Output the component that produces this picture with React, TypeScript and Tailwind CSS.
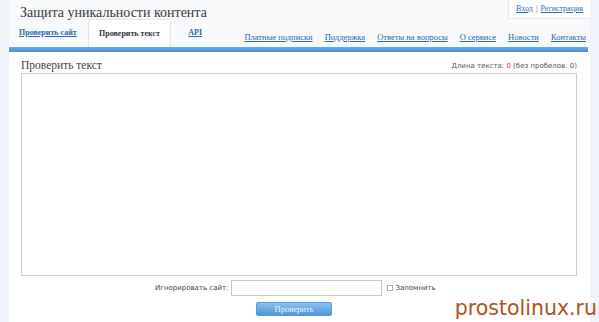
import React from "react";

const serif = { fontFamily: '"Liberation Serif", "DejaVu Serif", serif' };
const sans = { fontFamily: '"DejaVu Sans", Verdana, sans-serif' };

export default function App() {
  const links = [
    "Платные подписки",
    "Поддержка",
    "Ответы на вопросы",
    "О сервисе",
    "Новости",
    "Контакты",
  ];
  return (
    <div className="relative w-[599px] h-[322px] overflow-hidden bg-[#eef4fa] flex justify-center">
      <div className="w-[581px] h-full bg-white flex flex-col">
        {/* header */}
        <div className="relative h-[47px] bg-[#f7f9fb]">
          <div
            className="absolute left-[11px] top-[4px] text-[14px] leading-[18px] text-[#3a3a3a]"
            style={serif}
          >
            Защита уникальности контента
          </div>
          <div
            className="absolute right-0 top-0 h-[19px] w-[82px] bg-white border-l border-b border-[#e4e8ec] flex items-center justify-center text-[8px] text-[#2a6aa8]"
            style={serif}
          >
            <span className="underline">Вход</span>
            <span className="mx-[3px] text-[#666]">|</span>
            <span className="underline">Регистрация</span>
          </div>
          <div className="absolute left-0 right-0 bottom-0 flex items-end h-[28px]" style={serif}>
            <div className="w-[79px] h-full flex items-center pl-[10px]">
              <span className="text-[8px] font-bold underline text-[#2a6aa8]">Проверить сайт</span>
            </div>
            <div className="w-[83px] h-[28px] bg-white border border-b-0 border-[#dfe6ee] flex items-center justify-center">
              <span className="text-[8px] font-bold text-[#333]">Проверить текст</span>
            </div>
            <div className="w-[31px] h-full flex items-center justify-end">
              <span className="text-[8px] font-bold underline text-[#2a6aa8]">API</span>
            </div>
            <div className="flex-1 h-full flex items-center justify-end gap-[12px] pr-[4px] pt-[8px]">
              {links.map((t) => (
                <span key={t} className="text-[8.5px] underline text-[#2a6aa8] whitespace-nowrap">
                  {t}
                </span>
              ))}
            </div>
          </div>
        </div>
        {/* blue bar */}
        <div className="h-[5px] mr-[2px] bg-gradient-to-b from-[#6aa9e4] to-[#4a8fd6]" />
        {/* content */}
        <div className="pl-[12px] pr-[13px] pt-[4px]">
          <div className="flex items-end justify-between h-[16px]">
            <span className="text-[11.5px] leading-[14px] text-[#444]" style={serif}>
              Проверить текст
            </span>
            <span className="text-[7px] leading-[10px] text-[#555] pb-[1px]" style={sans}>
              Длина текста: <span className="text-[#e04040]">0</span> (без пробелов: 0)
            </span>
          </div>
          <div className="mt-[1px] h-[203px] border border-[#cfcfcf] bg-white" />
        </div>
        <div className="flex items-center pl-[146px] mt-[4px] h-[16px]" style={sans}>
          <span className="text-[7px] text-[#444]">Игнорировать сайт:</span>
          <div className="ml-[3px] w-[151px] h-[16px] border border-[#c8c8c8] bg-white" />
          <div className="ml-[5px] w-[6px] h-[6px] border border-[#aaa] bg-white" />
          <span className="ml-[2px] text-[7px] text-[#444]">Запомнить</span>
        </div>
        <div className="pl-[247px] mt-[6px]">
          <div
            className="w-[76px] h-[14px] rounded-[2px] bg-gradient-to-b from-[#8cc0ee] to-[#4d95dc] border border-[#5d98d0] flex items-center justify-center text-[8.5px] text-[#eaf3fc]"
            style={serif}
          >
            Проверить
          </div>
        </div>
      </div>
      <div
        className="absolute right-[2px] bottom-[1px] text-[20.5px] leading-[26px] text-[#b0521c]"
        style={sans}
      >
        prostolinux.ru
      </div>
    </div>
  );
}
